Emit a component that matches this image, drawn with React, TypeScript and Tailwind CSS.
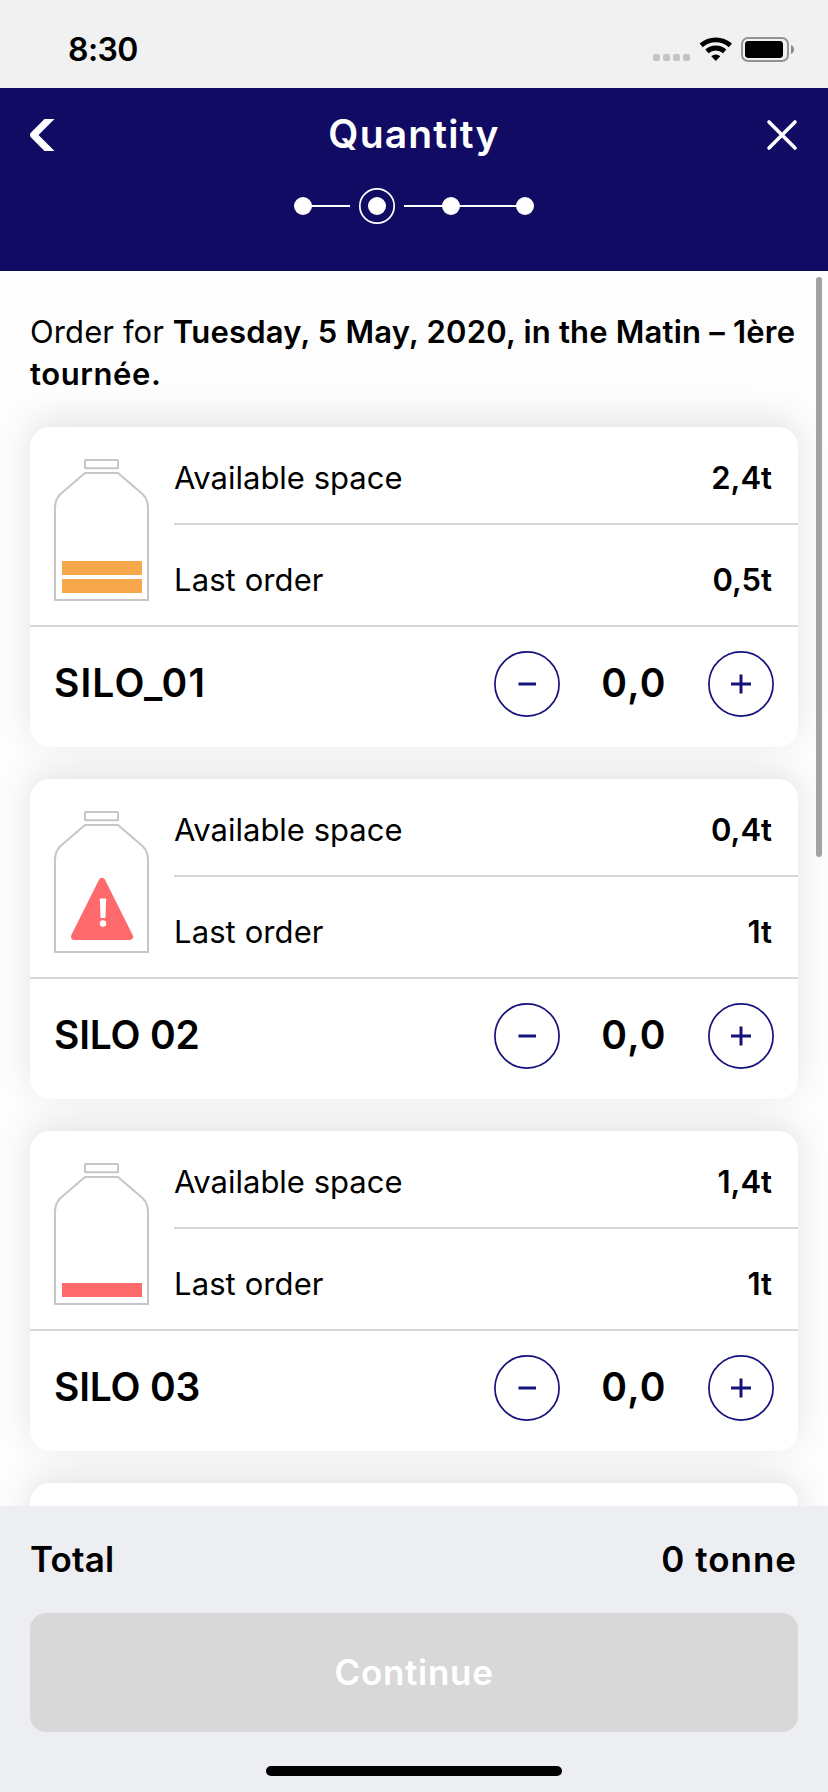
import React from "react";

type Level = "two" | "alert" | "one";

interface Silo {
  name: string;
  space: string;
  last: string;
  level: Level;
}

const silos: Silo[] = [
  { name: "SILO_01", space: "2,4t", last: "0,5t", level: "two" },
  { name: "SILO 02", space: "0,4t", last: "1t", level: "alert" },
  { name: "SILO 03", space: "1,4t", last: "1t", level: "one" },
];

function StatusBar() {
  return (
    <div className="flex h-[88px] shrink-0 items-start justify-between bg-[#f1f1f1] pl-[68px] pr-[34px]">
      <span className="mt-[30px] text-[32px] font-semibold leading-[40px] tracking-[-0.6px]">8:30</span>
      <svg className="mt-[36px]" width="142" height="27" viewBox="0 0 142 27">
        <g fill="#c4c4c4">
          <rect x="1" y="18" width="7" height="7" rx="2" />
          <rect x="11" y="18" width="7" height="7" rx="2" />
          <rect x="21" y="18" width="7" height="7" rx="2" />
          <rect x="31" y="18" width="7" height="7" rx="2" />
        </g>
        <g fill="none" stroke="#000" strokeWidth="4.8">
          <path d="M49.2 9.4A22 22 0 0 1 78.4 9.4" />
          <path d="M54.9 15.4A13.4 13.4 0 0 1 72.7 15.4" />
        </g>
        <path d="M59.3 20.3a6.6 6.6 0 0 1 9 0L63.8 25z" />
        <rect x="90" y="2" width="46" height="23" rx="6" fill="none" stroke="#929292" strokeWidth="1.9" />
        <rect x="93" y="5" width="38" height="17" rx="3.4" />
        <path d="M139 9c4 1.500 4 7.500 0 9z" fill="#8a8a8a" />
      </svg>
    </div>
  );
}

function Header() {
  return (
    <header className="flex h-[183px] shrink-0 flex-col bg-[#120b63] text-white">
      <div className="flex h-[94px] items-center justify-between pl-[30px] pr-[30px]">
        <svg width="32" height="32" viewBox="0 0 32 32" fill="#fff">
          <path d="M14.500 0H24.500L8.500 16L24.500 32H14.500L0.800 18.300Q-1 16 0.800 13.700Z" />
        </svg>
        <h1 className="-mt-[2px] text-[39px] font-semibold leading-[48px] tracking-[1.2px]">Quantity</h1>
        <svg width="32" height="32" viewBox="0 0 32 32" stroke="#fff" strokeWidth="3.600" strokeLinecap="round">
          <path d="M3 3L29 29M29 3L3 29" />
        </svg>
      </div>
      <svg className="mx-auto mt-[4px]" width="240" height="40" viewBox="0 0 240 40" fill="#fff">
        <circle cx="9" cy="20" r="9" />
        <rect x="17" y="19" width="39" height="2" />
        <circle cx="83" cy="20" r="9" />
        <circle cx="83" cy="20" r="17.200" fill="none" stroke="#fff" strokeWidth="1.700" />
        <rect x="110" y="19" width="40" height="2" />
        <circle cx="157" cy="20" r="9" />
        <rect x="164" y="19" width="60" height="2" />
        <circle cx="231" cy="20" r="9" />
      </svg>
    </header>
  );
}

function Bottle({ level }: { level: Level }) {
  return (
    <svg className="ml-[24px] mt-[32px] shrink-0" width="96" height="143" viewBox="0 0 96 143">
      <g fill="none" stroke="#c6c6c6" strokeWidth="2">
        <rect x="31" y="1" width="33" height="8.300" rx="0.500" />
        <path d="M31 14H64L88.500 35Q94 40.500 94 49V141H1V49Q1 40.500 6.500 35Z" />
      </g>
      {level === "two" && <rect x="8" y="102" width="80" height="14" fill="#f8a84a" />}
      {level === "two" && <rect x="8" y="120" width="80" height="14" fill="#f8a84a" />}
      {level === "one" && <rect x="8" y="120" width="80" height="14" fill="#ff6b6c" />}
      {level === "alert" && (
        <g>
          <path
            d="M48 70.500L75.500 125.500H20.500Z"
            fill="#ff6b6c"
            stroke="#ff6b6c"
            strokeWidth="7"
            strokeLinejoin="round"
          />
          <path d="M45.800 87.500H52.200L51.400 107H46.600Z" fill="#fff" />
          <circle cx="49" cy="112.500" r="3.200" fill="#fff" />
        </g>
      )}
    </svg>
  );
}

function RoundButton({ plus = false }: { plus?: boolean }) {
  return (
    <button className="size-[66px]" aria-label={plus ? "Increase" : "Decrease"}>
      <svg width="66" height="66" viewBox="0 0 66 66" fill="none" stroke="#15127c">
        <circle cx="33" cy="33" r="32.100" strokeWidth="1.700" />
        {plus ? (
          <path d="M23 33H43M33 23.500V42.500" strokeWidth="3" />
        ) : (
          <path d="M24.500 33H42" strokeWidth="3" />
        )}
      </svg>
    </button>
  );
}

function SiloCard({ silo }: { silo: Silo }) {
  const nameTracking = silo.name.includes("_") ? "tracking-[1.1px]" : "tracking-[-0.2px]";
  return (
    <section className="flex h-[320px] shrink-0 flex-col rounded-[20px] bg-white shadow-[0_-8px_34px_rgba(0,0,0,0.1)]">
      <div className="flex h-[200px] border-b-2 border-[#d7d7d7]">
        <Bottle level={silo.level} />
        <div className="ml-[24px] flex flex-1 flex-col text-[31px] leading-[40px]">
          <div className="flex h-[98px] justify-between border-b-2 border-[#d7d7d7] pr-[26px] pt-[31px]">
            <span>Available space</span>
            <span className="font-semibold">{silo.space}</span>
          </div>
          <div className="flex justify-between pr-[26px] pt-[35px]">
            <span className="tracking-[0.1px]">Last order</span>
            <span className="font-semibold">{silo.last}</span>
          </div>
        </div>
      </div>
      <div className="flex items-center pl-[24px] pr-[24px] pt-[24px]">
        <h2 className={`-mt-[2px] flex-1 text-[39px] font-semibold leading-[48px] ${nameTracking}`}>{silo.name}</h2>
        <RoundButton />
        <span className="-mt-[2px] w-[148px] text-center text-[39px] font-semibold leading-[48px] tracking-[1.3px]">
          0,0
        </span>
        <RoundButton plus />
      </div>
    </section>
  );
}

function Footer() {
  return (
    <footer className="flex h-[286px] shrink-0 flex-col bg-[#edeef2] px-[30px]">
      <div className="flex justify-between pt-[31px] text-[35px] font-semibold leading-[44px]">
        <span className="tracking-[0.2px]">Total</span>
        <span className="pr-[1px] tracking-[1px]">0 tonne</span>
      </div>
      <button className="mt-[32px] h-[119px] rounded-[16px] bg-[#d8d8d8] pb-[2px] text-[35px] font-semibold leading-[44px] tracking-[0.7px] text-white">
        Continue
      </button>
      <div className="mx-auto mt-[34px] h-[10px] w-[296px] rounded-full bg-black" />
    </footer>
  );
}

export default function App() {
  return (
    <div className="flex h-[1792px] w-[828px] flex-col overflow-hidden bg-[#fdfdfd] font-['Inter','Liberation_Sans',sans-serif] text-black">
      <StatusBar />
      <Header />
      <main className="relative flex h-[1235px] shrink-0 flex-col gap-[32px] overflow-hidden px-[30px]">
        <p className="-mb-[32px] h-[156px] shrink-0 whitespace-nowrap pt-[40px] text-[31px] leading-[42px]">
          <span className="tracking-[0.1px]">Order for </span>
          <strong className="font-semibold tracking-[0.2px]">
            Tuesday, 5 May, 2020, in the Matin – 1ère
            <br />
            <span className="tracking-[0.6px]">tournée.</span>
          </strong>
        </p>
        {silos.map((s) => (
          <SiloCard key={s.name} silo={s} />
        ))}
        <section className="h-[320px] shrink-0 rounded-[20px] bg-white shadow-[0_-8px_34px_rgba(0,0,0,0.1)]" />
        <div className="absolute right-[6px] top-[6px] h-[580px] w-[6px] rounded-full bg-[#a2a2a2]" />
      </main>
      <Footer />
    </div>
  );
}
